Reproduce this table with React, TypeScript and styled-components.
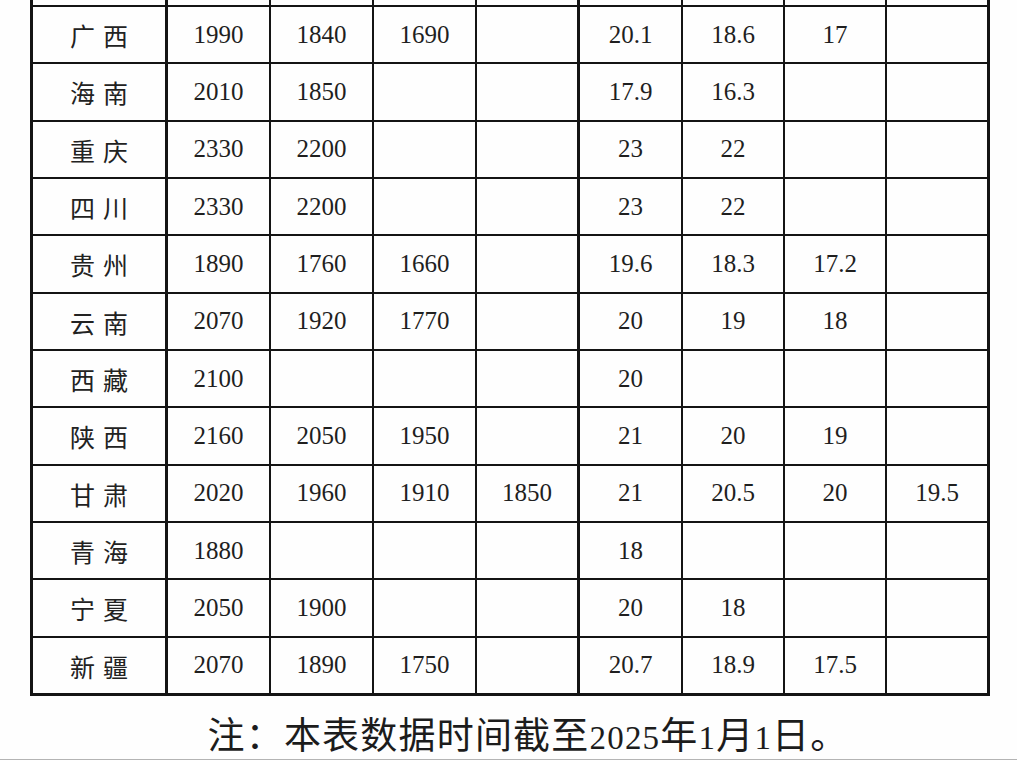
import React from 'react';
import styled, { createGlobalStyle } from 'styled-components';

const GlobalStyle = createGlobalStyle`
  html, body {
    margin: 0;
    padding: 0;
    background: #ffffff;
  }
`;

const serif = `"Liberation Serif", "Times New Roman", Tinos, "DejaVu Serif", serif`;

const Page = styled.div`
  width: 1017px;
  height: 760px;
  display: flex;
  flex-direction: column;
  box-sizing: border-box;
  padding-left: 30px;
  background: #fefefe;
  overflow: hidden;
`;

const Sheet = styled.div`
  display: grid;
  flex-shrink: 0;
  width: 960px;
  grid-template-columns: 135px 103px 103px 103px 103px 103px 102px 102px 103px;
  grid-template-rows: 7px repeat(10, 57.33px) 57.33px 58.4px;
  border-left: 3px solid #141414;
  box-sizing: border-box;
`;

const Cell = styled.div<{ $thick: boolean; $last: boolean }>`
  box-sizing: border-box;
  display: flex;
  align-items: center;
  justify-content: center;
  border-right: ${(p) => (p.$thick ? '3px' : '2px')} solid #141414;
  border-bottom: ${(p) => (p.$last ? '3px' : '2px')} solid #141414;
  font-family: ${serif};
  font-size: 25px;
  color: #1f1f1f;
  overflow: hidden;
`;

const Name = styled.span`
  display: flex;
  gap: 8px;
  font-family: "Noto Sans CJK SC", "Noto Sans", sans-serif;
  font-size: 25px;
  color: #222222;
  padding-top: 1px;
`;

const Note = styled.div`
  flex-shrink: 0;
  margin-top: 16px;
  padding-left: 18px;
  width: 960px;
  text-align: center;
  font-family: "Noto Sans CJK SC", sans-serif;
  font-size: 37px;
  line-height: 42px;
  letter-spacing: 1.2px;
  color: #1c1c1c;
`;

const Digits = styled.span`
  font-family: ${serif};
  font-size: 33px;
`;

const BottomRule = styled.div`
  flex-shrink: 0;
  margin-top: auto;
  margin-left: -30px;
  height: 3px;
  background: #b4b4b4;
`;

type Row = [string, ...string[]];

const rows: Row[] = [
  ['广西', '1990', '1840', '1690', '', '20.1', '18.6', '17', ''],
  ['海南', '2010', '1850', '', '', '17.9', '16.3', '', ''],
  ['重庆', '2330', '2200', '', '', '23', '22', '', ''],
  ['四川', '2330', '2200', '', '', '23', '22', '', ''],
  ['贵州', '1890', '1760', '1660', '', '19.6', '18.3', '17.2', ''],
  ['云南', '2070', '1920', '1770', '', '20', '19', '18', ''],
  ['西藏', '2100', '', '', '', '20', '', '', ''],
  ['陕西', '2160', '2050', '1950', '', '21', '20', '19', ''],
  ['甘肃', '2020', '1960', '1910', '1850', '21', '20.5', '20', '19.5'],
  ['青海', '1880', '', '', '', '18', '', '', ''],
  ['宁夏', '2050', '1900', '', '', '20', '18', '', ''],
  ['新疆', '2070', '1890', '1750', '', '20.7', '18.9', '17.5', ''],
];

// heavy rules after the name column, the fourth amount column and at the right edge
const thickCols = [0, 4, 8];

const App = () => {
  return (
    <>
      <GlobalStyle />
      <Page>
        <Sheet>
          {/* row cut off by the top of the picture */}
          {Array.from({ length: 9 }).map((_, c) => (
            <Cell key={`top-${c}`} $thick={thickCols.includes(c)} $last={false} />
          ))}

          {rows.map((row, r) =>
            row.map((value, c) => (
              <Cell
                key={`${r}-${c}`}
                $thick={thickCols.includes(c)}
                $last={r === rows.length - 1}
              >
                {c === 0 ? (
                  <Name>
                    {value.split('').map((ch, i) => (
                      <span key={i}>{ch}</span>
                    ))}
                  </Name>
                ) : (
                  value
                )}
              </Cell>
            ))
          )}
        </Sheet>

        <Note>
          注：本表数据时间截至<Digits>2025</Digits>年<Digits>1</Digits>月<Digits>1</Digits>日。
        </Note>

        <BottomRule />
      </Page>
    </>
  );
};

export default App;
